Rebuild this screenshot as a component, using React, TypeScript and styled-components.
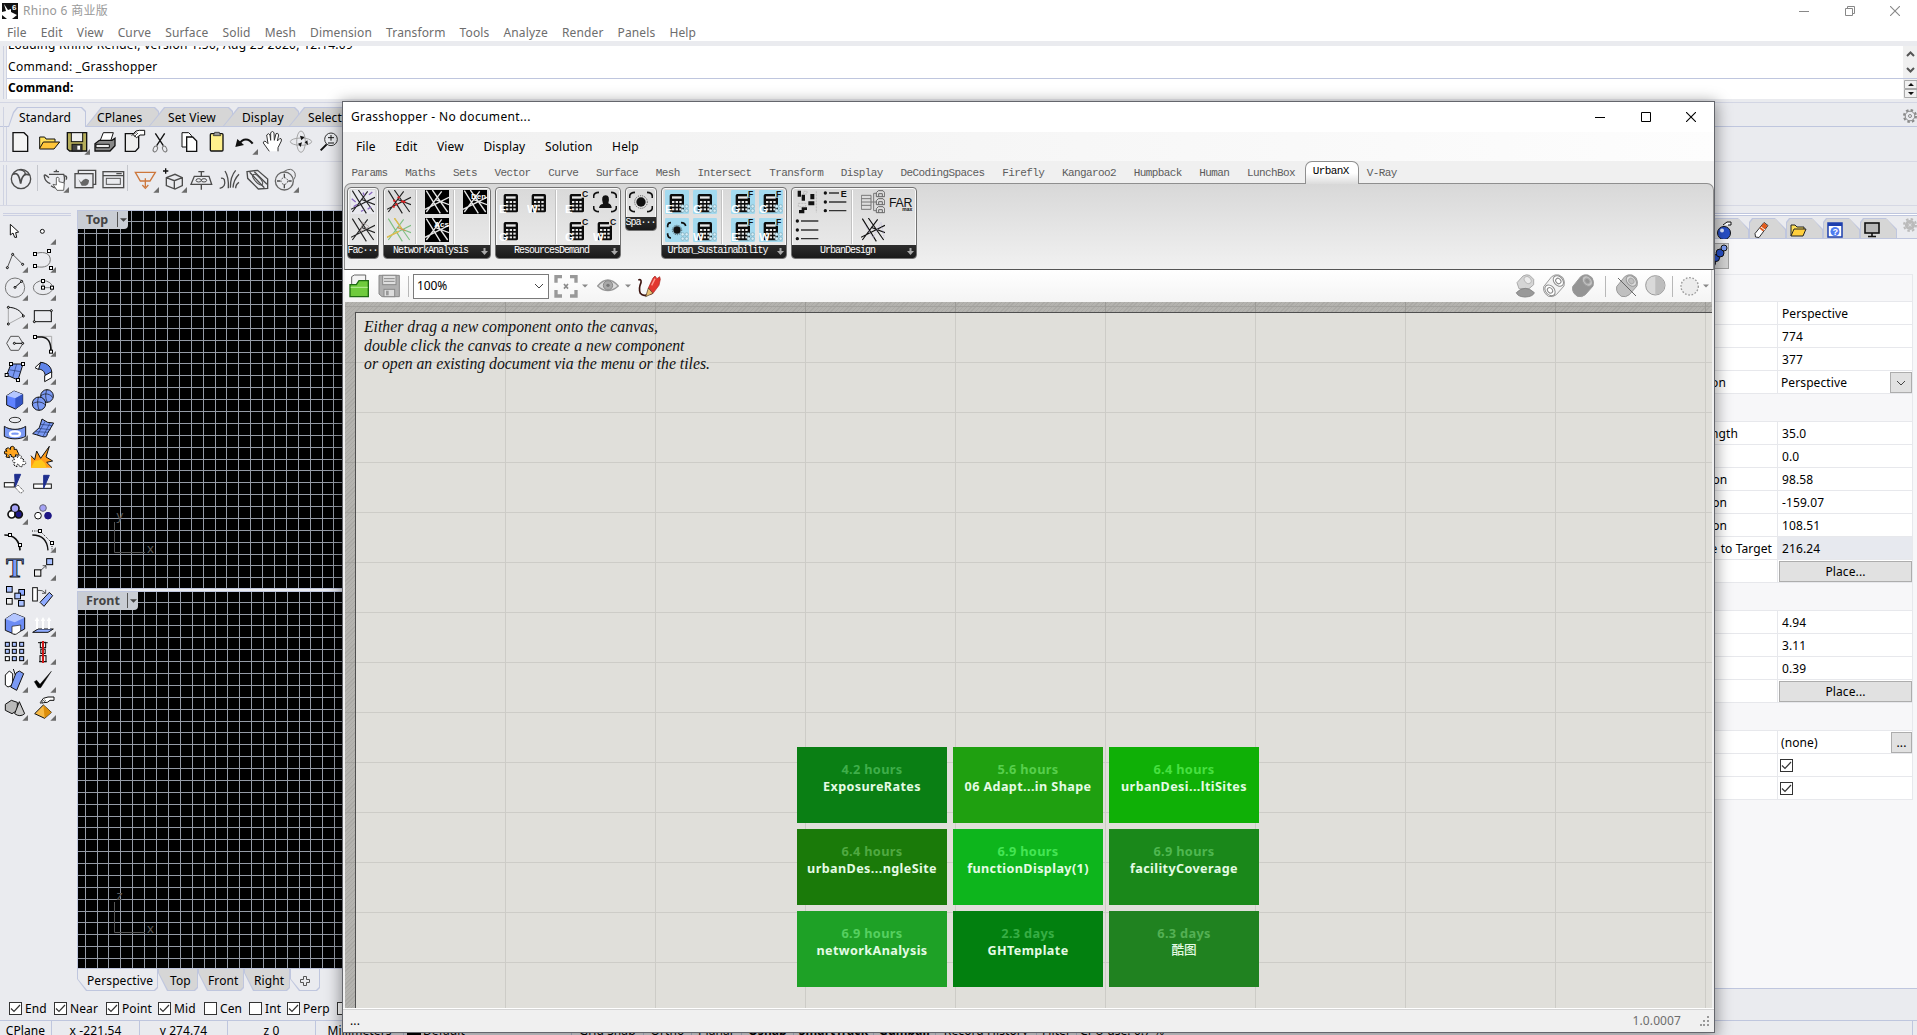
import React from "react";
import styled, { createGlobalStyle, css } from "styled-components";

const Global = createGlobalStyle`
  * { box-sizing: border-box; }
  body { margin: 0; overflow: hidden; background: #eaebef; }
  svg { display: block; }
`;

const UI = `"Noto Sans", "Open Sans", "Noto Sans CJK SC", sans-serif`;
const MONO = `"Liberation Mono", monospace`;
const LINE = "#bfc6de";

const Desktop = styled.div`
  position: relative;
  width: 1917px;
  height: 1035px;
  overflow: hidden;
  background: #eaebef;
  font: 12px/16px ${UI};
  letter-spacing: 0.1px;
  color: #000;
  white-space: nowrap;
`;

const Column = styled.div`
  display: flex;
  flex-direction: column;
`;

/* ---------- Rhino frame ---------- */

const TitleBar = styled.header`
  display: flex;
  align-items: center;
  height: 24px;
  padding: 0 17px 2px 2px;
  gap: 5px;
  background: #fff;
  color: #999;
  letter-spacing: 0.3px;
`;
const Spacer = styled.div`
  flex: 1;
`;
const WindowButtons = styled.div`
  display: flex;
  gap: 35.5px;
`;
const MenuBar = styled.nav`
  display: flex;
  align-items: center;
  gap: 14px;
  height: 17px;
  padding-left: 7px;
  background: #fff;
  color: #6d6d6d;
  letter-spacing: 0.14px;
`;
const CommandArea = styled.section`
  display: flex;
  height: 62px;
  padding: 5px 0 3px 0;
  border-bottom: 1px solid #d3d6e4;
`;
const Grip = styled.div`
  width: 4px;
  margin: 0 0 0 3px;
  border: solid #cfd3e2;
  border-width: 0 1px;
  flex: none;
`;
const CommandBody = styled(Column)`
  flex: 1;
  background: #fff;
`;
const History = styled.div`
  display: flex;
  flex: none;
  flex-direction: column;
  justify-content: flex-end;
  height: 33px;
  padding: 0 0 0 1px;
  line-height: 22px;
  letter-spacing: 0.3px;
  overflow: hidden;
  border-bottom: 1px solid ${LINE};
`;
const Prompt = styled.div`
  padding: 0 0 0 1px;
  font-weight: 700;
  line-height: 18px;
`;
const CommandScroll = styled(Column)`
  width: 14px;
  background: #f0f0f0;
`;

const TabRow = styled.div`
  display: flex;
  height: 24px;
  padding: 4px 0 0 3px;
  border-bottom: 1px solid ${LINE};
`;
const TabStart = styled.div`
  width: 5px;
  height: 20px;
  border: solid #cfd3e2;
  border-width: 0 0 0 1px;
`;
const ToolTab = styled.div<{ $w: number; $active?: boolean; $pad?: number }>`
  position: relative;
  width: ${(p) => p.$w + 10}px;
  height: ${(p) => (p.$active ? 20 : 19)}px;
  margin-right: -10px;
  padding-left: ${(p) => p.$pad ?? 19}px;
  line-height: 21px;
  z-index: 0;
  &::before, &::after {
    content: "";
    position: absolute;
    z-index: -1;
    inset: 0;
    background: ${LINE};
    clip-path: polygon(0 100%, ${(p) => (p.$active ? "5px 5px, 9px 0" : "15px 0")}, calc(100% - 4px) 0, 100% 4px, 100% 100%);
  }
  &::after {
    inset: 1px 1px 0 1px;
    background: ${(p) => (p.$active ? "#eaebef" : "#d6d6d6")};
  }
  ${(p) => p.$active && css`z-index: 2; width: ${p.$w}px; margin-right: 0;`}
`;
const GearSlot = styled.div`
  display: flex;
  width: 14px;
  padding-top: 2px;
`;
const ToolbarRow = styled.div<{ $h: number; $pad: number; $left: number }>`
  display: flex;
  height: ${(p) => p.$h}px;
  padding: ${(p) => p.$pad}px 0 0 0;
  border-bottom: 1px solid #d6d8e4;
  > svg:first-of-type { margin-left: ${(p) => p.$left}px; }
`;
const ToolSeparator = styled.div`
  width: 1px;
  height: 26px;
  margin: 0 3px 0 2px;
  background: #c4c6cc;
`;

const Body = styled.main`
  display: flex;
  height: 794px;
`;
const Palette = styled.aside`
  width: 77px;
  padding: 7px 0 0;
`;
const PaletteGrip = styled.div`
  height: 3px;
  margin: 0 6px 1px 3px;
  border: solid #cbcfe2;
  border-width: 1px 0;
`;
const PaletteGrid = styled.div`
  display: grid;
  grid-template-columns: 28px 28px;
  grid-auto-rows: 28px;
`;
const Viewports = styled(Column)`
  width: 1583px;
  padding-top: 4px;
`;
const Viewport = styled.section<{ $h: number; $gap: number }>`
  position: relative;
  width: 400px;
  height: ${(p) => p.$h}px;
  margin-bottom: ${(p) => p.$gap}px;
  border: solid ${LINE};
  border-width: 1px 0 1px 1px;
  background: #000;
`;
const ViewLabel = styled.div<{ $gap: number }>`
  position: absolute;
  left: 0;
  top: 0;
  display: flex;
  align-items: center;
  gap: ${(p) => p.$gap}px;
  height: 18px;
  padding: 0 1px 1px 8px;
  border-radius: 0 0 4px 0;
  background: #c9cdd4;
  color: #444;
  font: 700 12.5px/17px ${UI};
`;
const LabelArrow = styled.span`
  width: 10px;
  height: 15px;
  padding: 6px 0 0 2px;
  border-left: 1px solid #555;
`;
const ViewTabs = styled.div`
  display: flex;
  height: 22px;
`;
const ViewTab = styled.div<{ $w: number; $active?: boolean; $pad?: number }>`
  position: relative;
  z-index: 0;
  width: ${(p) => p.$w}px;
  height: 22px;
  padding-left: ${(p) => p.$pad ?? 10}px;
  line-height: 24px;
  &::before, &::after {
    content: "";
    position: absolute;
    z-index: -1;
    inset: 0;
    background: ${LINE};
    clip-path: polygon(0 0, 0 ${(p) => (p.$active ? "10px" : "4px")}, 9px 100%, calc(100% - 3px) 100%, 100% calc(100% - 3px), 100% 0);
  }
  &::after {
    inset: 0 1px 1px 1px;
    background: ${(p) => (p.$active ? "#eaebef" : "#d6d6d6")};
  }
`;
const Osnap = styled.div`
  display: flex;
  align-items: center;
  height: 20px;
  padding-bottom: 3px;
`;
const SnapItem = styled.label<{ $w: number }>`
  display: flex;
  align-items: center;
  gap: 3px;
  width: ${(p) => p.$w}px;
`;
const Box = styled.span`
  display: flex;
  align-items: center;
  justify-content: center;
  width: 13px;
  height: 13px;
  border: 1px solid #333;
  background: #fff;
`;
const StatusBar = styled.footer`
  display: flex;
  height: 20px;
  border-top: 1px solid ${LINE};
`;
const StatusCell = styled.div<{ $w: number; $bold?: boolean; $start?: boolean }>`
  display: flex;
  align-items: center;
  justify-content: ${(p) => (p.$start ? "flex-start" : "center")};
  gap: 2px;
  width: ${(p) => p.$w}px;
  height: 20px;
  padding: 0 0 0 ${(p) => (p.$start ? 3 : 0)}px;
  border-right: 1px solid ${LINE};
  font-weight: ${(p) => (p.$bold ? 700 : 400)};
  line-height: 20px;
`;
const Swatch = styled.span`
  width: 14px;
  height: 12px;
  background: #000;
`;

/* ---------- Properties panel ---------- */

const Properties = styled(Column)`
  width: 257px;
  padding-top: 7px;
`;
const PanelTabs = styled.div`
  display: flex;
  height: 26px;
  padding-top: 4px;
  border: solid ${LINE};
  border-width: 1px 0;
  box-shadow: inset 0 2px 0 -1px #fff, inset 0 3px 0 -1px ${LINE};
`;
const PanelTab = styled.div`
  position: relative;
  z-index: 0;
  display: flex;
  width: 37px;
  height: 20px;
  padding: 3px 0 0 3px;
  &::before, &::after {
    content: "";
    position: absolute;
    z-index: -1;
    inset: 0;
    background: ${LINE};
    clip-path: polygon(0 100%, 0 4px, 3px 0, 26px 0, 100% 11px, 100% 100%);
  }
  &::after {
    inset: 1px 1px 0 1px;
    background: #d6d6d6;
  }
`;
const PanelBody = styled.div`
  flex: 1;
  padding: 4px 4px 0 0;
  background: #f7f7f9;
`;
const PanelFoot = styled.div`
  height: 12px;
  border-top: 1px solid ${LINE};
`;
const ObjectButtons = styled.div`
  display: flex;
  height: 32px;
  padding-left: 43px;
  border-bottom: 1px solid #e7e8ec;
`;
const ObjectButton = styled.div`
  width: 26px;
  height: 26px;
  border: 1px solid #a0a0a0;
  background: #d4d4d4;
`;
const Sheet = styled.div`
  border-right: 1px solid #e7e8ec;
`;
const SheetHeader = styled.div<{ $h: number }>`
  height: ${(p) => p.$h}px;
  border-bottom: 1px solid #e7e8ec;
`;
const SheetRow = styled.div`
  display: flex;
  height: 23px;
  border-bottom: 1px solid #e7e8ec;
  background: #fff;
`;
const SheetLabel = styled.div`
  width: 118px;
  padding: 0 0 0 8px;
  border-right: 1px solid #e7e8ec;
  line-height: 23px;
`;
const SheetValue = styled.div<{ $muted?: boolean; $left?: number }>`
  display: flex;
  flex: 1;
  justify-content: space-between;
  padding-left: ${(p) => p.$left ?? 4}px;
  line-height: 23px;
  background: ${(p) => (p.$muted ? "#e7e9ef" : "#fff")};
`;
const PushButton = styled.div<{ $w: number }>`
  display: flex;
  align-items: center;
  justify-content: center;
  width: ${(p) => p.$w}px;
  height: 21px;
  margin-top: 1px;
  border: 1px solid #adadad;
  background: #e1e1e1;
`;
const ValueCheck = styled(Box)`
  margin: 5px 0 0;
`;

/* ---------- Grasshopper window ---------- */

const GhWindow = styled.section`
  position: absolute;
  left: 342px;
  top: 101px;
  width: 1373px;
  height: 932px;
  display: flex;
  flex-direction: column;
  border: 1px solid #64666c;
  background: #f0f0f0;
  box-shadow: 0 3px 14px 2px rgba(0, 0, 0, 0.38);
`;
const GhTitle = styled.header`
  display: flex;
  align-items: center;
  height: 30px;
  padding: 0 18px 1px 8px;
  background: #fff;
  letter-spacing: 0.36px;
`;
const GhMenu = styled.nav`
  display: flex;
  align-items: center;
  gap: 19.6px;
  height: 29px;
  padding: 0 0 0 13px;
  background: linear-gradient(90deg, #f0f0f0, #fdfdfd);
  letter-spacing: 0.14px;
`;
const GhTabs = styled.div`
  display: flex;
  height: 22px;
  padding-left: 8.5px;
  gap: 17.7px;
  font: 11px/24px ${MONO};
  letter-spacing: -0.6px;
  color: #5c5c5c;
`;
const GhTab = styled.div<{ $active?: boolean }>`
  height: 22px;
  ${(p) =>
    p.$active &&
    css`
      position: relative;
      height: 23px;
      margin: 0 -9.76px 0 -8px;
      padding: 0 9px 0 7px;
      line-height: 18px;
      color: #000;
      border: 1px solid #8f8f8f;
      border-bottom: 0;
      border-radius: 7px 7px 0 0;
      background: linear-gradient(#fff 50%, #dcdcdc);
    `}
`;
const Ribbon = styled.div`
  display: flex;
  align-items: flex-start;
  gap: 4px;
  height: 87px;
  margin-left: 1px;
  padding: 3px 3px 0 1.5px;
  border: 1px solid #8f8f8f;
  border-bottom-color: #555;
  border-radius: 7px 7px 0 0;
  background: linear-gradient(#d8d8d8, #f1f1f1);
`;
const RibbonPanel = styled.div<{ $w: number; $short?: boolean }>`
  width: ${(p) => p.$w}px;
  height: ${(p) => (p.$short ? 44 : 72)}px;
  border: 1px solid #727272;
  border-radius: 4px;
  overflow: hidden;
  background: linear-gradient(#d9d9d9, #ececec);
  box-shadow: inset 0 0 0 1px #fafafa;
`;
const RibbonIcons = styled.div<{ $short?: boolean }>`
  display: flex;
  height: ${(p) => (p.$short ? 29 : 57)}px;
  padding: 2px 0 0 3px;
`;
const IconGroup = styled.div<{ $cols: number }>`
  display: grid;
  grid-template-columns: repeat(${(p) => p.$cols}, 28px);
  grid-auto-rows: 28px;
`;
const RibbonRule = styled.div`
  width: 2px;
  height: 54px;
  margin-right: 8px;
  border-left: 1px solid #c2c2c2;
  border-right: 1px solid #fff;
`;
const RibbonCaption = styled.div`
  display: flex;
  height: 14px;
  margin: 0 -1px;
  background: linear-gradient(#2e2e2e, #191919);
  color: #fff;
  font: 10px/11px ${MONO};
  letter-spacing: -1px;
`;
const CaptionText = styled.span`
  flex: 1;
  text-align: center;
`;
const GhToolbar = styled.div`
  display: flex;
  align-items: center;
  height: 32px;
  margin: 0 2px 0 2px;
  padding: 0 2px 0 4px;
  border-right: 1px solid #ccc;
  background: linear-gradient(#fff, #f4f4f4);
`;
const Zoom = styled.div`
  display: flex;
  align-items: center;
  justify-content: space-between;
  width: 136px;
  height: 25px;
  margin-right: 5px;
  padding: 0 4px 0 3px;
  border: 1px solid #7a7a7a;
  background: #fff;
  font: 12px/18px ${UI};
  letter-spacing: -0.1px;
`;
const GhRule = styled.div<{ $l: number; $r: number }>`
  width: 1px;
  height: 21px;
  margin: 0 ${(p) => p.$r}px 0 ${(p) => p.$l}px;
  background: #b8b8b8;
`;
const Gap = styled.div<{ $w: number }>`
  width: ${(p) => p.$w}px;
`;
const Canvas = styled.div`
  display: flex;
  height: 706px;
  margin: 0 2px;
  padding: 10px 0 0 10px;
  background:
    repeating-linear-gradient(90deg, transparent 0 149px, #9c9b97 149px 150px) 11px 0,
    repeating-linear-gradient(180deg, transparent 0 49px, #a3a29e 49px 50px) 0 11px,
    repeating-linear-gradient(135deg, #b4b3af 0 2px, #aaa9a5 2px 3px);
`;
const Paper = styled.div`
  display: flex;
  flex-direction: column;
  flex: 1;
  padding: 5px 0 0 8px;
  border: solid #4f4f4f;
  border-width: 1px 0 0 1px;
  background:
    repeating-linear-gradient(90deg, transparent 0 149px, #cdccc7 149px 150px),
    repeating-linear-gradient(180deg, transparent 0 49px, #cdccc7 49px 50px),
    #e0dfda;
`;
const Hint = styled.p`
  height: 429px;
  margin: 0;
  font: italic 15.75px/18.6px "Liberation Serif", serif;
  letter-spacing: 0;
  color: #111;
`;
const Tiles = styled.div`
  display: grid;
  grid-template-columns: repeat(3, 150px);
  grid-auto-rows: 76px;
  gap: 6px;
  margin-left: 433px;
`;
const Tile = styled.div<{ $bg: string; $time: string; $light?: boolean }>`
  display: flex;
  flex-direction: column;
  align-items: center;
  padding-top: 13px;
  background: ${(p) => p.$bg};
  color: #e4fbe4;
  font: 700 12.6px/18px ${UI};
  small {
    font-size: 12.8px;
    letter-spacing: 0.3px;
    color: ${(p) => p.$time};
  }
  span {
    letter-spacing: ${(p) => (p.$light ? 0 : 0.4)}px;
    font-weight: ${(p) => (p.$light ? 500 : 700)};
    line-height: ${(p) => (p.$light ? 15 : 18)}px;
  }
`;
const GhStatus = styled.footer`
  display: flex;
  align-items: center;
  height: 23px;
  padding: 2px 3px 0 7px;
  border-top: 1px solid #fff;
  box-shadow: inset 0 1px 0 #d4d4d4;
`;
const Version = styled.span`
  margin-right: 19px;
  color: #6d6d6d;
`;

/* ---------- Drawing helpers ---------- */

const Sq = ({ x, y, s = 9, f = "#fff" }: { x: number; y: number; s?: number; f?: string }) => (
  <rect x={x - s / 2} y={y - s / 2} width={s} height={s} fill={f} stroke="#000" strokeWidth={3} />
);
const Dot = ({ x, y, r = 3 }: { x: number; y: number; r?: number }) => (
  <circle cx={x} cy={y} r={r} fill="#fff" stroke="#000" strokeWidth={3} />
);
const ToolSvg = styled.svg`
  flex: none;
`;
const Tool = ({ children, more }: { children: React.ReactNode; more?: boolean }) => (
  <ToolSvg width={28} height={28} viewBox="0 0 84 84" fill="none" stroke="#111" strokeWidth={3}>
    {children}
    {more && <path d="M84 66V83H67Z" fill="#6c6c6c" stroke="none" />}
  </ToolSvg>
);

const BLUE = "#7b9af5";
const gray = "#555";

const palette: [React.ReactNode, boolean][] = [
  [<path d="M31 22V54L39 48L44 61H50L47 47L56 45Z" fill="#fff" />, false],
  [<circle cx={43} cy={43} r={6} fill="#fff" />, true],
  [<><path d="M22 68L38 28L68 58" stroke={gray} /><Dot x={22} y={68} /><Dot x={38} y={28} /><Dot x={68} y={58} /></>, true],
  [<><path d="M21 26C40 20 66 20 67 44C66 70 36 68 21 64" stroke="#777" /><Sq x={21} y={27} /><Sq x={21} y={63} /><Sq x={63} y={18} /><Sq x={69} y={69} /></>, true],
  [<><circle cx={45} cy={44} r={29} stroke="#777" /><path d="M45 43L64 26" /><Dot x={45} y={43} /><Dot x={65} y={25} /></>, true],
  [<><ellipse cx={45} cy={44} rx={29} ry={21} stroke="#777" /><path d="M45 24V44H72" stroke="#888" /><Sq x={45} y={24} /><Sq x={45} y={44} /><Sq x={72} y={44} /></>, true],
  [<><path d="M25 19V69L70 45" stroke="#888" strokeWidth={2} /><path d="M25 19C45 19 62 28 70 45" /><Dot x={25} y={19} /><Dot x={70} y={45} /><Dot x={25} y={69} /></>, true],
  [<><rect x={19} y={29} width={51} height={33} /><Dot x={70} y={29} /><Dot x={19} y={62} /></>, true],
  [<><path d="M20 43L32 22H56L69 43L56 64H32Z" stroke={gray} /><path d="M44 43H68" /><Dot x={43} y={43} /><Dot x={68} y={43} /></>, true],
  [<><path d="M21 22H71V68" stroke="#aaa" /><path d="M21 24H42C62 26 69 40 69 68" strokeWidth={5} /><Sq x={21} y={24} /><Sq x={69} y={68} /></>, true],
  [<><path d="M33 21H69L54 69L20 54Z" fill={BLUE} /><path d="M50 21L38 62M26 38L62 44" stroke="#23386f" strokeWidth={2} /><Sq x={33} y={21} /><Sq x={69} y={21} /><Sq x={54} y={69} /><Sq x={20} y={54} /></>, true],
  [<><path d="M21 32L38 16L50 20L32 38Z" fill="#fff" /><path d="M38 16C60 18 72 32 71 48L52 62C52 46 46 38 32 36Z" fill="#5e83e8" /><path d="M71 44V62L50 74V56Z" fill="#fff" /></>, true],
  [<><path d="M20 32L42 18L68 28V56L46 72L20 60Z" fill="#5f82ff" /><path d="M20 32L42 18L68 28L46 40Z" fill="#b4c6ff" stroke="none" /><path d="M46 40L68 28V56L46 72Z" fill="#3354c4" stroke="none" /></>, true],
  [<><circle cx={57} cy={33} r={19} fill={BLUE} /><path d="M39 32C52 22 68 28 75 38M57 14C50 30 54 44 58 52" strokeWidth={2} /><circle cx={33} cy={56} r={20} fill={BLUE} /><path d="M14 56C26 48 44 50 52 60M32 36C26 50 30 68 34 76" strokeWidth={2} /></>, true],
  [<><ellipse cx={45} cy={21} rx={17} ry={8} stroke="#333" /><path d="M13 40C30 52 60 52 77 40V70C60 80 30 80 13 70Z" fill={BLUE} /><ellipse cx={45} cy={62} rx={15} ry={7} fill={BLUE} stroke="#fff" strokeWidth={7} /></>, true],
  [<><path d="M42 18Q58 32 77 30L58 62Q58 76 40 70T14 62L34 44Z" fill={BLUE} /><path d="M30 46L68 50M52 24L28 66M66 30L44 72M22 56L62 58M38 34L74 38" stroke="#23386f" strokeWidth={2} /></>, true],
  [<><path d="M17 24L25 20L31 26Q29 15 38 16Q46 18 42 25L50 25L53 33Q60 42 50 43L48 40L44 50L33 46Q36 40 30 40Q24 42 29 50L18 48L21 39Q12 42 13 33Q15 27 21 31Z" fill="#ffa51e" /><path d="M40 50L48 46L54 50Q54 40 61 43Q67 46 62 52L71 54L69 61Q78 60 77 67Q75 73 68 70L65 78L57 75Q58 69 52 70Q48 73 52 78L41 72L45 64Q38 66 38 59Q39 54 44 56Z" fill="#fff" strokeDasharray="4 2" /></>, false],
  [<><path d="M9 80V44L20 56L26 30L38 52L64 16L54 48L72 58L56 66L72 80Z" fill="#ff9c1a" stroke="none" /><path d="M9 80L20 60L40 56L50 66L56 80Z" fill="#ffc81a" stroke="none" /><path d="M9 44L20 56L26 30L38 52L64 16L54 48L74 60L56 64L72 80" /></>, false],
  [<><rect x={13} y={41} width={30} height={13} fill="#fff" /><path d="M44 16H62L46 53Z" fill="#1f2f8f" stroke="#1f2f8f" /><path d="M46 56L54 48L71 66L62 73Z" fill="#fff" strokeDasharray="4 2" strokeWidth={2} /></>, false],
  [<><rect x={17} y={45} width={53} height={13} fill="#fff" /><path d="M47 19H64L47 58Z" fill="#1f2f8f" stroke="#1f2f8f" /></>, false],
  [<><circle cx={45} cy={34} r={12} fill="#a4a2f5" strokeWidth={5} /><circle cx={35} cy={52} r={11} fill="#fff" strokeWidth={5} /><circle cx={56} cy={52} r={11} fill="#1d1684" strokeWidth={5} /><circle cx={45} cy={35} r={9} fill="#a4a2f5" stroke="none" /></>, true],
  [<><circle cx={45} cy={33} r={10} fill="#a4a2f5" stroke="#667" /><circle cx={30} cy={56} r={10} fill="#fff" /><circle cx={60} cy={56} r={10} fill="#1d1684" stroke="#1d1684" /></>, false],
  [<><path d="M13 30C40 30 58 45 60 76" strokeWidth={5} /><Sq x={30} y={30} /><Sq x={60} y={60} /></>, false],
  [<><path d="M13 30C40 30 58 45 60 76" strokeWidth={4} /><path d="M12 18H36L72 54V78" strokeDasharray="3 4" /><Sq x={36} y={18} /><Sq x={72} y={54} /></>, true],
  [<text x={45} y={72} textAnchor="middle" fontFamily="Liberation Serif" fontWeight={700} fontSize={80} fill={BLUE} stroke="#111" strokeWidth={2.5}>T</text>, false],
  [<><path d="M36 54L54 38M44 38H54V47" strokeWidth={2} /><Sq x={29} y={60} s={19} f="#eee" /><Sq x={65} y={26} s={18} f="#a9c0ff" /></>, true],
  [<><Sq x={28} y={25} s={17} f="#a9c0ff" /><Sq x={65} y={34} s={17} f="#8fabff" /><Sq x={53} y={45} s={17} f="#a9c0ff" /><Sq x={28} y={61} s={17} f="#eee" /><Sq x={64} y={67} s={17} f="#a9c0ff" /></>, false],
  [<><rect x={14} y={20} width={14} height={40} fill="#fff" /><path d="M36 64L64 34L74 44L48 76Z" fill="#8fabff" /><path d="M30 28Q44 26 52 36M53 26V37H42" strokeWidth={2} /></>, false],
  [<><path d="M16 30L42 13L74 26V60L44 76L16 64Z" fill="#6d8df5" /><path d="M16 30L42 13L74 26L44 40Z" fill="#b4c6ff" stroke="none" /><path d="M36 74V52L62 48V66L48 76Z" fill="#fff" strokeWidth={2} /></>, true],
  [<><path d="M14 70L30 60H76L60 70Z" fill="#8fabff" /><path d="M27 60V30M45 60V30M63 60V30" stroke="#fff" strokeWidth={6} /><path d="M20 36L27 24L34 36ZM38 36L45 24L52 36ZM56 36L63 24L70 36Z" fill="#fff" stroke="none" /></>, true],
  [<>{[22, 43, 65].flatMap((x) => [22, 43, 65].map((y) => <Sq key={x + "-" + y} x={x} y={y} s={12} f={x === 22 && y === 65 ? "#fff" : "#a9c0ff"} />))}</>, true],
  [<><Sq x={45} y={24} s={16} f="#eee" /><Sq x={45} y={43} s={13} f="#eee" /><Sq x={45} y={65} s={18} f="#eee" /><path d="M30 17H59M33 74H56" /><path d="M45 12V78" stroke="#d01818" strokeWidth={6} /></>, true],
  [<><path d="M16 30L28 18L38 26V60L24 66L16 60Z" fill="#fff" /><path d="M40 12L46 30" /><path d="M48 24L58 18L71 26L50 76L32 66Z" fill="#7b9af5" /></>, true],
  [<path d="M19 50L26 46L36 58L70 19L38 68L30 68Z" fill="#000" strokeWidth={1.5} />, true],
  [<><path d="M16 34L34 22L52 28V52L36 62L16 52Z" fill="#b9b9b9" /><path d="M58 26L74 62Q60 74 44 62Z" fill="#c9c9c9" /></>, true],
  [<><path d="M20 62L46 36L70 58L50 76Z" fill="#f7ba46" /><path d="M46 36L70 58L50 76Z" fill="#dd8e0b" stroke="none" /><path d="M36 30L46 16L60 12H78V22H66L58 28Z" fill="#fff" strokeWidth={3} /><path d="M36 30L50 20M42 32L54 22" stroke="#666" /></>, true],
];

const standardTools: [React.ReactNode, boolean?][] = [
  [<path d="M21 17H54L65 28V73H21Z" fill="#f4f4f4" strokeWidth={4} />],
  [<><path d="M17 64V30H32L36 36H63V44" fill="#ffe05a" /><path d="M17 64L28 45H77L60 66H17Z" fill="#ffc53a" /></>],
  [<><path d="M16 17H74V72H23L16 66Z" fill="#b5ad5a" strokeWidth={4} /><rect x={28} y={17} width={34} height={27} fill="#eee" /><rect x={30} y={52} width={30} height={20} fill="#444" /><rect x={46} y={56} width={8} height={12} fill="#fff" stroke="none" /></>, true],
  [<><path d="M30 42L40 17H70L62 42" fill="#fff" /><path d="M15 50L28 40H66L75 34V56L60 72H15Z" fill="#888" strokeWidth={4} /><path d="M18 52H58V62H18Z" fill="#eee" /></>],
  [<><path d="M22 20H62V62L52 73H22Z" fill="#eee" strokeWidth={4} /><path d="M44 22L54 12L64 10H80V24H66L56 32Z" fill="#fff" /><path d="M40 26L56 16M48 30L60 18" stroke="#555" /></>],
  [<><path d="M28 19L52 56M56 19L32 56" strokeWidth={4} /><ellipse cx={28} cy={66} rx={6} ry={9} transform="rotate(25 28 66)" stroke="#777" /><ellipse cx={56} cy={66} rx={6} ry={9} transform="rotate(-25 56 66)" stroke="#777" /></>],
  [<><path d="M24 17H44L52 25V60H24Z" fill="#fff" /><path d="M38 30H56L68 42V73H38Z" fill="#fff" strokeWidth={4} /></>],
  [<><rect x={25} y={20} width={38} height={52} rx={3} fill="#fff08c" strokeWidth={4} /><path d="M34 26L38 16H52L56 26Z" fill="#999" strokeWidth={2} /></>],
  [<><path d="M28 50C38 34 56 32 68 50" strokeWidth={6} /><path d="M16 60L22 36L42 54Z" fill="#111" stroke="none" /></>, true],
  [<path d="M34 73L16 48Q16 40 24 44L30 50L26 24Q32 16 36 24L38 40V17Q44 10 48 17L49 40L54 20Q60 16 62 24L58 42L66 34Q72 34 70 42L60 62V73" fill="#fff" stroke="#333" />],
  [<><ellipse cx={45} cy={44} rx={32} ry={11} stroke="#999" strokeWidth={2.5} /><ellipse cx={45} cy={44} rx={13} ry={32} stroke="#999" strokeWidth={2.5} /><path d="M42 26L56 30L46 40ZM36 50L48 46L44 60ZM56 46L64 40L66 54Z" fill="#111" stroke="none" /></>],
  [<><path d="M20 70L38 52" strokeWidth={6} /><circle cx={51} cy={37} r={19} fill="#eceef2" stroke="#333" /><path d="M42 32H60M51 24V41M42 48H60" /></>],
];

const VR = "#4c4c4c";
const vrayTools: [React.ReactNode, boolean?][] = [
  [<><circle cx={42} cy={42} r={29} stroke={VR} strokeWidth={4} /><path d="M18 28C32 20 37 34 41 56C45 30 54 24 68 30" strokeWidth={5} stroke={VR} /><path d="M36 14C54 16 58 24 52 30" strokeWidth={4} stroke={VR} /></>],
  [<><path d="M24 38Q8 24 10 34Q12 50 28 56M24 28H68Q74 44 66 60M30 62Q40 70 50 70M38 20H54M46 14V20M68 34Q80 30 76 44" stroke={VR} strokeWidth={4} /><path d="M48 76L36 58L46 60V38Q52 34 54 40V50L70 54L68 76Z" fill="#fff" stroke="#666" /></>, true],
  [<><path d="M28 24V16H80V58H72" stroke={VR} strokeWidth={4} /><rect x={18} y={26} width={54} height={42} stroke={VR} strokeWidth={4} /><path d="M28 42L36 52Q48 34 60 46Q60 60 50 62H38Z" fill="#666" stroke="none" /></>],
  [<><rect x={18} y={20} width={62} height={48} stroke={VR} strokeWidth={4} /><path d="M18 32H80M58 26H74" stroke={VR} strokeWidth={4} /><rect x={28} y={40} width={42} height={18} stroke="#555" /></>],
  [<><path d="M13 22H73L57 48H28Z" stroke="#cd773c" strokeWidth={4} /><path d="M43 40V66M34 60L43 70L52 60" stroke="#cd773c" strokeWidth={4} /></>, true],
  [<><path d="M22 38L48 28L70 38V62L48 72L22 62ZM22 38L46 47L70 38M46 47V72" stroke={VR} strokeWidth={4} /><path d="M12 18H28M20 10V26" strokeWidth={4} /></>, true],
  [<><path d="M22 34H66L74 58H12Z" stroke={VR} strokeWidth={4} /><path d="M43 34V18M43 58V74M34 20H52" stroke={VR} strokeWidth={4} /><ellipse cx={35} cy={46} rx={8} ry={5} stroke={VR} /><ellipse cx={51} cy={46} rx={8} ry={5} stroke={VR} /></>],
  [<path d="M14 70Q34 66 28 44Q24 38 18 40M40 70Q42 36 30 18M46 68Q46 34 62 16M54 68Q56 44 72 28M62 70Q62 58 72 52" stroke={VR} strokeWidth={4} />],
  [<><path d="M12 20L44 16L74 42V70L46 72L14 40Z" stroke={VR} strokeWidth={4} /><path d="M20 22L64 68M34 20L72 58" stroke={VR} strokeWidth={4} /><ellipse cx={44} cy={44} rx={8} ry={20} transform="rotate(-42 44 44)" stroke={VR} /></>],
  [<><circle cx={40} cy={48} r={27} stroke="#666" strokeWidth={4} /><path d="M38 20Q62 4 72 24Q76 34 68 44" stroke="#666" /><circle cx={40} cy={48} r={10} stroke={VR} strokeDasharray="5 4" /><path d="M40 26V38M40 58V70M18 48H28M52 48H62" stroke={VR} strokeWidth={4} /></>, true],
];

const Check = () => (
  <svg width={11} height={11} viewBox="0 0 11 11" fill="none" stroke="#333" strokeWidth={1.2}>
    <path d="M1 5.5L4 8.5L10 2" />
  </svg>
);
const DownArrow = ({ c = "#444", w = 7 }: { c?: string; w?: number }) => (
  <svg width={w} height={4} viewBox="0 0 8 4"><path d="M0 0H8L4 4Z" fill={c} /></svg>
);
const Gear = ({ solid }: { solid?: boolean }) => (
  <svg width={14} height={14} viewBox="0 0 14 14" fill="none" stroke={solid ? "#bbb" : "#8a8a8a"}>
    <circle cx={7} cy={7} r={6} strokeWidth={2} strokeDasharray="2.5 2.2" />
    <circle cx={7} cy={7} r={solid ? 3.6 : 4.8} strokeWidth={solid ? 3 : 1} />
    <circle cx={7} cy={7} r={1.5} />
  </svg>
);
const MinIcon = ({ c }: { c: string }) => <svg width={10} height={10}><path d="M0 5.5H10" stroke={c} /></svg>;
const MaxIcon = ({ c }: { c: string }) => <svg width={10} height={10}><path d="M.5 .5H9.5V9.5H.5Z" stroke={c} fill="none" /></svg>;
const RestoreIcon = ({ c }: { c: string }) => <svg width={10} height={10}><path d="M.5 2.5H7.5V9.5H.5ZM2.5 2.5V.5H9.5V7.5H7.5" stroke={c} fill="none" /></svg>;
const CloseIcon = ({ c }: { c: string }) => <svg width={10} height={10}><path d="M0 0L10 10M10 0L0 10" stroke={c} strokeWidth={1.1} /></svg>;

/* ---------- Viewport grid ---------- */

const STEP = 11.88;
const ViewGrid = ({ h, x0, y0, axisY, up }: { h: number; x0: number; y0: number; axisY: number; up: string }) => {
  const xs = Array.from({ length: 26 }, (_, i) => Math.floor(x0 + i * STEP) + 0.5);
  const ys = Array.from({ length: 34 }, (_, i) => Math.floor(y0 + i * STEP) + 0.5).filter((y) => y < h);
  return (
    <svg width={330} height={h} stroke="#959ba6" fill="none">
      {xs.map((x) => <path key={"x" + x} d={`M${x} 0V${h}`} />)}
      {ys.map((y) => <path key={"y" + y} d={`M0 ${y}H330`} />)}
      <path d={`M36.5 ${axisY - 30}V${axisY + 0.5}H67`} stroke="#555" />
      <g fill="#5c5c5c" stroke="none" fontFamily="Noto Sans" fontSize={13}>
        <text x={38.5} y={axisY - 32}>{up}</text>
        <text x={69} y={axisY + 1}>x</text>
      </g>
    </svg>
  );
};

/* ---------- Grasshopper component icons (72 unit cell) ---------- */

const G = ({ children }: { children: React.ReactNode }) => (
  <svg width={24} height={24} viewBox="0 0 72 72" fill="none">{children}</svg>
);
const NET = "M4 2L46 70M22 0L68 66M50 4L4 66M0 58L72 22M30 28L72 44";
const Net = ({ c = "#222", bg, dots, w = 3.4, extra }: { c?: string; bg?: string; dots?: string; w?: number; extra?: React.ReactNode }) => (
  <G>
    {bg && <rect width={72} height={72} fill={bg} />}
    <path d={NET} stroke={c} strokeWidth={w} />
    {dots && [[35, 22], [22, 32], [28, 43], [52, 36], [20, 50], [46, 34]].map(([x, y]) => <circle key={x} cx={x} cy={y} r={3.5} fill={dots} />)}
    {extra}
  </G>
);
const label = (x: number, y: number, t: string, size: number, f: string) => (
  <text x={x} y={y} fontFamily="Liberation Sans" fontWeight={700} fontSize={size} letterSpacing={0} fill={f}>{t}</text>
);
const Calc = ({ l, c, blue }: { l: string; c?: string; blue?: boolean }) => (
  <G>
    {blue && <rect width={72} height={72} rx={4} fill="#a3daef" />}
    <rect x={14} y={12} width={43} height={55} rx={5} fill="#0c0c0c" />
    <rect x={21} y={19} width={29} height={7} fill="#e8e8e8" />
    {[33, 44, 55].flatMap((y) => [21, 32, 43].map((x) => <rect key={x + "." + y} x={x} y={y} width={7} height={6} fill="#e8e8e8" />))}
    {label(0, 68, l, 34, "#fff")}
    {c && <rect x={48} y={0} width={24} height={23} fill={blue ? "#a3daef" : "#dfdfdf"} />}
    {c && label(51, 20, c, 26, "#111")}
    {blue && <Flower />}
  </G>
);
const Flower = () => (
  <g fill="#d4eef8" stroke="#7fa9b8" strokeWidth={2}>
    <circle cx={53} cy={49} r={5} /><circle cx={65} cy={49} r={5} /><circle cx={53} cy={62} r={5} /><circle cx={65} cy={62} r={5} />
  </g>
);
const Focus = ({ person, blue }: { person?: boolean; blue?: boolean }) => (
  <G>
    {blue && <rect width={72} height={72} rx={4} fill="#a3daef" />}
    <path d={blue ? "M8 28V22Q9 14 18 14M48 14Q60 14 62 24M18 60Q9 60 8 50V46" : "M2 24V18Q3 8 18 7M54 7Q69 8 70 18V24M70 48V54Q69 64 54 65M18 65Q3 64 2 54V48"} stroke="#111" strokeWidth={5} />
    {person ? <path d="M18 54Q20 42 30 42Q22 16 38 16Q52 16 46 40Q56 44 56 54Z" fill="#111" /> : (
      <><circle cx={36} cy={36} r={blue ? 14 : 19} stroke="#111" strokeWidth={2} strokeDasharray="3 3" /><circle cx={36} cy={36} r={blue ? 11 : 14} fill="#111" /></>
    )}
    {blue && <Flower />}
  </G>
);
const List = ({ e }: { e?: boolean }) => (
  <G>
    <path d={`M18 9H${e ? 48 : 70}M18 36H70M18 62H70`} stroke="#333" strokeWidth={4} />
    {[9, 36, 62].map((y) => <circle key={y} cx={7} cy={y} r={5} fill="#111" />)}
    {e && label(53, 20, "E", 27, "#111")}
  </G>
);
const Blocks = () => (
  <G>
    <path d="M8 2H18V20H8ZM20 14H30V32H20ZM46 12H58V28H46ZM40 34H58V46H40ZM20 52H36V60H28V70H12V60H20Z" fill="#111" />
    <path d="M26 4H36V12H26ZM10 40H32V50H10ZM64 4V68" stroke="#aaa" strokeWidth={2} strokeDasharray="6 3" />
  </G>
);
const Tree = () => (
  <G>
    <path d="M1 16H30V58H1ZM1 26H30M1 36H30M1 46H30M30 36H46M38 10V62M38 10H46M38 62H46" stroke="#777" strokeWidth={3} />
    {[2, 26, 50].map((y) => <path key={y} d={`M46 ${y + 6}L52 ${y}H66L71 ${y + 6}V${y + 18}H46ZM53 ${y + 18}V${y + 9}H64V${y + 18}`} stroke="#666" strokeWidth={3} />)}
  </G>
);
const Far = () => (
  <G>
    <text x={0} y={50} fontFamily="Liberation Sans" fontSize={37} textLength={70} fill="#111">FAR</text>
    {label(40, 62, "max", 15, "#111")}
  </G>
);

type PanelDef = { name: string; w: number; short?: boolean; plus?: boolean; groups: { cols: number; icons: React.ReactNode[] }[] };
const panels: PanelDef[] = [
  {
    name: "Fac···", w: 32, groups: [{ cols: 1, icons: [
      <Net bg="#e9e9ee" extra={<path d="M2 26L14 36M50 58L60 50M8 50L18 44M54 14L64 6M36 8L40 16M30 64L38 60" stroke="#8a68c0" strokeWidth={4} />} />,
      <Net extra={<path d="M34 12L54 26L30 40Z" stroke="#a99" strokeWidth={2} />} />] }],
  },
  {
    name: "NetworkAnalysis", w: 108, plus: true, groups: [
      { cols: 1, icons: [<Net dots="#e02020" />, <Net c="#7fbf83" w={3.4} extra={<><path d="M0 58L36 40M22 0L46 34" stroke="#e3bb4b" strokeWidth={4} /><path d="M30 28L56 38" stroke="#e08a4b" strokeWidth={3} /></>} />] },
      { cols: 1, icons: [<Net bg="#000" c="#e6e6e6" w={4} />, <Net bg="#000" c="#e6e6e6" w={4} extra={label(28, 26, "Acs", 24, "#fff")} />] },
      { cols: 1, icons: [<Net bg="#000" c="#e6e6e6" w={4} extra={label(24, 26, "Den", 24, "#fff")} />] },
    ],
  },
  {
    name: "ResourcesDemand", w: 126, plus: true, groups: [
      { cols: 2, icons: [<Calc l="E" />, <Calc l="W" />, <Calc l="G" />] },
      { cols: 2, icons: [<Calc l="E" c="C" />, <Focus person />, <Calc l="G" c="C" />, <Calc l="W" c="C" />] },
    ],
  },
  { name: "Spa···", w: 32, short: true, groups: [{ cols: 1, icons: [<Focus />] }] },
  {
    name: "Urban_Sustainability", w: 126, plus: true, groups: [
      { cols: 2, icons: [<Calc l="E" blue />, <Calc l="G" blue />, <Focus blue />, <Calc l="W" blue />] },
      { cols: 2, icons: [<Calc l="G" c="F" blue />, <Calc l="G" c="F" blue />, <Calc l="E" c="F" blue />, <Calc l="W" c="F" blue />] },
    ],
  },
  {
    name: "UrbanDesign", w: 126, plus: true, groups: [
      { cols: 2, icons: [<Blocks />, <List e />, <List />] },
      { cols: 2, icons: [<Tree />, <Far />, <Net c="#111" extra={<path d="M12 20L36 60L60 14L70 60" stroke="#b9b2d8" strokeWidth={2} strokeDasharray="5 3" />} />] },
    ],
  },
];

const ghTabs = ["Params", "Maths", "Sets", "Vector", "Curve", "Surface", "Mesh", "Intersect", "Transform", "Display", "DeCodingSpaces", "Firefly", "Kangaroo2", "Humpback", "Human", "LunchBox", "UrbanX", "V-Ray"];

const tiles = [
  ["4.2 hours", "ExposureRates", "#0a7f14", "#3fae4a"],
  ["5.6 hours", "06 Adapt...in Shape", "#1fa010", "#57cf4c"],
  ["6.4 hours", "urbanDesi...ltiSites", "#0fb006", "#47e040"],
  ["6.4 hours", "urbanDes...ngleSite", "#1a7a09", "#50a941"],
  ["6.9 hours", "functionDisplay(1)", "#0db51c", "#45e554"],
  ["6.9 hours", "facilityCoverage", "#1a881a", "#4fb750"],
  ["6.9 hours", "networkAnalysis", "#1ea126", "#56d060"],
  ["2.3 days", "GHTemplate", "#02800f", "#37ae45"],
  ["6.3 days", "酷图", "#208220", "#54b054"],
];

const T = ({ w = 22, children }: { w?: number; children: React.ReactNode }) => (
  <svg width={w} height={24} viewBox={`0 0 ${w * 3} 72`} fill="none" strokeWidth={3} stroke="#8a8a8a">{children}</svg>
);
const CYL = "M2 38L26 8Q36 0 48 3L60 11Q67 22 63 36L40 62Q30 71 16 67L6 58Q0 50 2 38Z";
const Cylinder = ({ f, top }: { f: string; top: string }) => (
  <>
    <path d={CYL} fill={f} stroke="#999" />
    <ellipse cx={46} cy={21} rx={18} ry={13} transform="rotate(48 46 21)" fill={top} stroke="#999" />
    <ellipse cx={46} cy={21} rx={9} ry={7} transform="rotate(48 46 21)" fill={f} stroke="#aaa" />
  </>
);

const panelIcons: React.ReactNode[] = [
  <><circle cx={9} cy={12} r={6.5} fill="#2850c8" stroke="#111" /><circle cx={7} cy={9.5} r={2} fill="#dfe8ff" /><path d="M8 4L12 1H16V4H13" fill="#fff" stroke="#111" /></>,
  <><path d="M3 12.5L12 1.5L16 4.5L7 16.5L3.5 16Z" fill="#fff" stroke="#333" /><path d="M7.5 7.5L12 1.8L15.6 4.8L11 10.5Z" fill="#e05a1c" /><path d="M9 6L13 9" stroke="#fff" /></>,
  <><path d="M2 15V4H6L8 6H15V8" fill="#ffe05a" stroke="#222" /><path d="M2 15L5 8H17L14 15Z" fill="#ffcf3c" stroke="#222" /></>,
  <><rect x={2} y={2} width={14} height={14} fill="#fff" stroke="#1d3fae" strokeWidth={1.5} /><path d="M2 3.5H16" stroke="#1d3fae" strokeWidth={3} /><circle cx={9} cy={10.5} r={4.5} fill="#4f7cf0" /><text x={6.6} y={14} fontSize={9} fontWeight={700} fontFamily="Liberation Sans" fill="#fff">?</text></>,
  <><rect x={2} y={2} width={14} height={10} fill="#b8b8b8" stroke="#111" strokeWidth={1.6} /><path d="M9 12V15M5 15.5H13" stroke="#111" strokeWidth={1.6} /></>,
];

const Row = ({ k, v, muted }: { k?: string; v: string; muted?: boolean }) => (
  <SheetRow><SheetLabel>{k}</SheetLabel><SheetValue $muted={muted}>{v}</SheetValue></SheetRow>
);
const PlaceRow = () => (
  <SheetRow><SheetLabel /><SheetValue $left={1}><PushButton $w={133}>Place...</PushButton></SheetValue></SheetRow>
);
const CheckRow = () => (
  <SheetRow><SheetLabel /><SheetValue $left={2}><ValueCheck><Check /></ValueCheck></SheetValue></SheetRow>
);

const Rhino = () => (
  <>
    <TitleBar>
      <svg width={16} height={16} viewBox="0 0 16 16">
        <rect width={16} height={16} fill="#111" />
        <path d="M0 9L4 8L2 1L6 7L9 6L9 9L15 12L10 16H5L0 12Z" fill="#fff" />
        <text x={10} y={7} fontSize={8} fontWeight={700} fontFamily="Liberation Sans" letterSpacing={0} fill="#fff">6</text>
      </svg>
      <span>Rhino 6 商业版</span>
      <Spacer />
      <WindowButtons><MinIcon c="#888" /><RestoreIcon c="#888" /><CloseIcon c="#888" /></WindowButtons>
    </TitleBar>
    <MenuBar>
      {["File", "Edit", "View", "Curve", "Surface", "Solid", "Mesh", "Dimension", "Transform", "Tools", "Analyze", "Render", "Panels", "Help"].map((m) => <span key={m}>{m}</span>)}
    </MenuBar>
    <CommandArea>
      <Grip />
      <CommandBody>
        <History>
          <span>Loading Rhino Render, version 1.50, Aug 25 2020, 12:14:09</span>
          <span>Command: _Grasshopper</span>
        </History>
        <Prompt>Command:</Prompt>
      </CommandBody>
      <CommandScroll>
        <svg width={14} height={53} viewBox="0 0 14 53" fill="none" stroke="#555" strokeWidth={2}>
          <path d="M4 10L7.5 6.5L11 10M4 22L7.5 25.5L11 22" />
          <path d="M0 32.5H14" stroke={LINE} strokeWidth={1} />
          <path d="M1.5 34.5H14V42.5H1.5ZM1.5 43.5H14V51.5H1.5Z" stroke="#aaa" strokeWidth={1} fill="#f0f0f0" />
          <path d="M5 40H11L8 37ZM5 46H11L8 49Z" fill="#111" stroke="none" />
        </svg>
      </CommandScroll>
    </CommandArea>
    <TabRow>
      <TabStart />
      <ToolTab $w={78} $active $pad={11}>Standard</ToolTab>
      <ToolTab $w={63} $pad={11}>CPlanes</ToolTab>
      <ToolTab $w={74}>Set View</ToolTab>
      <ToolTab $w={66}>Display</ToolTab>
      <ToolTab $w={70}>Select</ToolTab>
      <Spacer />
      <GearSlot><Gear /></GearSlot>
    </TabRow>
    <ToolbarRow $h={35} $pad={0} $left={-1}>
      <Grip />
      {standardTools.map(([d, more], i) => <Tool key={i} more={more}>{d}</Tool>)}
    </ToolbarRow>
    <ToolbarRow $h={44} $pad={3} $left={0}>
      <Grip />
      {vrayTools.map(([d, more], i) => (
        <React.Fragment key={i}>
          {(i === 1 || i === 4) && <ToolSeparator />}
          <Tool more={more}>{d}</Tool>
        </React.Fragment>
      ))}
    </ToolbarRow>
    <Body>
      <Palette>
        <PaletteGrip />
        <PaletteGrid>{palette.map(([d, more], i) => <Tool key={i} more={more}>{d}</Tool>)}</PaletteGrid>
      </Palette>
      <Viewports>
        <Viewport $h={379} $gap={2}>
          <ViewGrid h={377} x0={6.4} y0={10.4} axisY={341} up="y" />
          <ViewLabel $gap={9}>Top<LabelArrow><DownArrow /></LabelArrow></ViewLabel>
        </Viewport>
        <Viewport $h={378} $gap={0}>
          <ViewGrid h={376} x0={7.2} y0={10.2} axisY={340} up="z" />
          <ViewLabel $gap={7}>Front<LabelArrow><DownArrow /></LabelArrow></ViewLabel>
        </Viewport>
        <ViewTabs>
          <ViewTab $w={81} $active>Perspective</ViewTab>
          <ViewTab $w={40} $pad={12}>Top</ViewTab>
          <ViewTab $w={46}>Front</ViewTab>
          <ViewTab $w={46}>Right</ViewTab>
          <ViewTab $w={30} $active>
            <svg width={10} height={22} viewBox="0 0 10 22"><path d="M3.5 7.5H6.5V10.5H9.5V13.5H6.5V16.5H3.5V13.5H.5V10.5H3.5Z" fill="none" stroke="#555" /></svg>
          </ViewTab>
        </ViewTabs>
      </Viewports>
      <Properties>
        <PanelTabs>
          <Gap $w={52} />
          {panelIcons.map((d, i) => <PanelTab key={i}><svg width={18} height={18} viewBox="0 0 18 18" fill="none">{d}</svg></PanelTab>)}
          <Spacer />
          <Gear solid />
        </PanelTabs>
        <PanelBody>
          <ObjectButtons>
            <ObjectButton>
              <svg width={24} height={24} viewBox="0 0 24 24" fill="#2850c8" stroke="#111">
                <circle cx={8} cy={19} r={3.5} /><circle cx={12} cy={14} r={3.5} /><circle cx={16} cy={9} r={4} /><circle cx={20} cy={4} r={3} fill="#7f9ff5" />
              </svg>
            </ObjectButton>
          </ObjectButtons>
          <Sheet>
            <SheetHeader $h={27} />
            <Row v="Perspective" />
            <Row v="774" />
            <Row v="377" />
            <SheetRow>
              <SheetLabel>Projection</SheetLabel>
              <SheetValue $left={3}>
                Perspective
                <PushButton $w={22}>
                  <svg width={10} height={6} fill="none" stroke="#444"><path d="M1 1L5 5L9 1" /></svg>
                </PushButton>
              </SheetValue>
            </SheetRow>
            <SheetHeader $h={28} />
            <Row k="Lens Length" v="35.0" />
            <Row v="0.0" />
            <Row k="X Location" v="98.58" />
            <Row k="Y Location" v="-159.07" />
            <Row k="Z Location" v="108.51" />
            <Row k="Distance to Target" v="216.24" muted />
            <PlaceRow />
            <SheetHeader $h={28} />
            <Row v="4.94" />
            <Row v="3.11" />
            <Row v="0.39" />
            <PlaceRow />
            <SheetHeader $h={28} />
            <SheetRow>
              <SheetLabel />
              <SheetValue $left={3}>(none)<PushButton $w={21}>...</PushButton></SheetValue>
            </SheetRow>
            <CheckRow />
            <CheckRow />
          </Sheet>
        </PanelBody>
        <PanelFoot />
      </Properties>
    </Body>
    <Osnap>
      <Grip><Gap $w={1} /></Grip>
      <Gap $w={2} />
      {([["End", 1, 45], ["Near", 1, 52], ["Point", 1, 52], ["Mid", 1, 46], ["Cen", 0, 45], ["Int", 0, 38], ["Perp", 1, 50], ["Tan", 0, 50]] as [string, number, number][]).map(([n, on, w]) => (
        <SnapItem key={n} $w={w}><Box>{on ? <Check /> : null}</Box>{n}</SnapItem>
      ))}
    </Osnap>
    <StatusBar>
      <StatusCell $w={52}>CPlane</StatusCell>
      <StatusCell $w={88}>x -221.54</StatusCell>
      <StatusCell $w={88}>y 274.74</StatusCell>
      <StatusCell $w={88}>z 0</StatusCell>
      <StatusCell $w={88}>Millimeters</StatusCell>
      <StatusCell $w={168} $start><Swatch />Default</StatusCell>
      <StatusCell $w={72}>Grid Snap</StatusCell>
      <StatusCell $w={48}>Ortho</StatusCell>
      <StatusCell $w={50}>Planar</StatusCell>
      <StatusCell $w={52} $bold>Osnap</StatusCell>
      <StatusCell $w={80} $bold>SmartTrack</StatusCell>
      <StatusCell $w={62} $bold>Gumball</StatusCell>
      <StatusCell $w={101}>Record History</StatusCell>
      <StatusCell $w={40}>Filter</StatusCell>
      <StatusCell $w={836} $start>CPU use: 0.7 %</StatusCell>
    </StatusBar>
  </>
);

const Grasshopper = () => (
  <GhWindow>
    <GhTitle>
      <span>Grasshopper - No document...</span>
      <Spacer />
      <WindowButtons><MinIcon c="#000" /><MaxIcon c="#000" /><CloseIcon c="#000" /></WindowButtons>
    </GhTitle>
    <GhMenu>{["File", "Edit", "View", "Display", "Solution", "Help"].map((m) => <span key={m}>{m}</span>)}</GhMenu>
    <GhTabs>{ghTabs.map((t) => <GhTab key={t} $active={t === "UrbanX"}>{t}</GhTab>)}</GhTabs>
    <Ribbon>
      {panels.map((p) => (
        <RibbonPanel key={p.name} $w={p.w} $short={p.short}>
          <RibbonIcons $short={p.short}>
            {p.groups.map((g, i) => (
              <React.Fragment key={i}>
                {i > 0 && <RibbonRule />}
                <IconGroup $cols={g.cols}>{g.icons.map((ic, j) => <React.Fragment key={j}>{ic}</React.Fragment>)}</IconGroup>
              </React.Fragment>
            ))}
          </RibbonIcons>
          <RibbonCaption>
            <CaptionText>{p.name}</CaptionText>
            {p.plus && <svg width={12} height={14} viewBox="0 0 12 14"><path d="M4.5 3H6.5V6H9L5.5 10L2 6H4.5Z" fill="#aaa" /></svg>}
          </RibbonCaption>
        </RibbonPanel>
      ))}
    </Ribbon>
    <GhToolbar>
      <T w={20}>
        <path d="M8 30V8L16 3H50V30" fill="#f4f4f4" stroke="#666" />
        <path d="M3 68V32H22L30 20H58V68Z" fill="#6fcb3d" stroke="#1d6b12" strokeWidth={4} />
        <path d="M5 40H56" stroke="#b9f09a" />
      </T>
      <Gap $w={9} />
      <T w={22}>
        <path d="M3 4H64V68H12L3 60Z" fill="#b0b0b0" />
        <rect x={14} y={4} width={40} height={28} fill="#e0e0e0" /><path d="M18 14H50M18 22H50" />
        <rect x={18} y={46} width={32} height={22} fill="#ddd" /><rect x={24} y={50} width={8} height={14} fill="#999" stroke="none" />
      </T>
      <GhRule $l={8} $r={4} />
      <Zoom>100%<svg width={10} height={6} fill="none" stroke="#444"><path d="M1 1L5 5L9 1" /></svg></Zoom>
      <T w={24}>
        <path d="M6 26V8H24M48 8H66V26M66 48V66H48M24 66H6V48" stroke="#999" strokeWidth={10} />
        <path d="M30 30L42 44M42 30L30 44" strokeWidth={5} />
      </T>
      <Gap $w={4} />
      <DownArrow c="#888" w={6} />
      <Gap $w={9} />
      <T w={22}>
        <path d="M2 36Q32 0 64 36Q32 64 2 36Z" fill="#ddd" stroke="#999" strokeWidth={4} />
        <circle cx={33} cy={34} r={14} fill="#a8a8a8" stroke="#888" /><circle cx={33} cy={34} r={5} fill="#777" stroke="none" />
      </T>
      <Gap $w={6} />
      <DownArrow c="#888" w={6} />
      <Gap $w={6} />
      <T w={24}>
        <path d="M4 18Q14 14 12 26Q4 44 10 58Q18 68 30 62" stroke="#3c1510" strokeWidth={5} />
        <path d="M34 42L48 12L54 6L60 14L68 8L70 16L66 34L48 58L40 62Z" fill="#e2362f" stroke="#a32620" strokeWidth={2} />
        <path d="M34 42L48 58L26 68Z" fill="#e9bf70" stroke="#432" strokeWidth={2} />
        <path d="M44 34L54 14" stroke="#ff9a90" strokeWidth={4} />
      </T>
      <Spacer />
      <T w={20}>
        <path d="M6 26L24 6Q34 0 44 4L56 16V32L42 44H12Z" fill="#d5d5d5" stroke="#aaa" />
        <path d="M4 56Q30 30 58 56Q54 68 30 69Q8 68 4 56Z" fill="#999" stroke="#888" />
        <ellipse cx={38} cy={18} rx={12} ry={9} transform="rotate(48 38 18)" fill="#ececec" stroke="#bbb" />
      </T>
      <Gap $w={8} />
      <T>
        <path d={CYL} fill="#f3f3f3" stroke="#999" />
        <ellipse cx={46} cy={21} rx={18} ry={13} transform="rotate(48 46 21)" fill="#fff" /><ellipse cx={46} cy={21} rx={9} ry={7} transform="rotate(48 46 21)" />
        <ellipse cx={21} cy={49} rx={18} ry={13} transform="rotate(48 21 49)" fill="#fff" /><ellipse cx={21} cy={49} rx={9} ry={7} transform="rotate(48 21 49)" />
      </T>
      <Gap $w={7} />
      <T><Cylinder f="#949494" top="#c4c4c4" /></T>
      <GhRule $l={11} $r={10} />
      <T><Cylinder f="#c0c0c0" top="#dcdcdc" /><path d="M6 12L60 66" stroke="#666" /></T>
      <Gap $w={6} />
      <T>
        <circle cx={34} cy={34} r={29} fill="#d9d9d9" stroke="#999" />
        <path d="M34 6A28 28 0 0 1 34 62Z" fill="#bdbdbd" stroke="none" />
      </T>
      <GhRule $l={6} $r={7} />
      <T w={20}><circle cx={29} cy={37} r={26} fill="#ececec" stroke="#999" strokeWidth={4} strokeDasharray="5 5" /></T>
      <Gap $w={3} />
      <DownArrow c="#888" w={6} />
    </GhToolbar>
    <Canvas>
      <Paper>
        <Hint>
          Either drag a new component onto the canvas,<br />
          double click the canvas to create a new component<br />
          or open an existing document via the menu or the tiles.
        </Hint>
        <Tiles>
          {tiles.map(([time, name, bg, c]) => (
            <Tile key={name} $bg={bg} $time={c} $light={name === "酷图"}><small>{time}</small><span>{name}</span></Tile>
          ))}
        </Tiles>
      </Paper>
    </Canvas>
    <GhStatus>
      <span>...</span>
      <Spacer />
      <Version>1.0.0007</Version>
      <svg width={11} height={11} fill="#999">
        <path d="M7 0h2v2h-2zM3 4h2v2h-2zM7 4h2v2h-2zM0 8h2v2h-2zM3 8h2v2h-2zM7 8h2v2h-2z" />
      </svg>
    </GhStatus>
  </GhWindow>
);

export default function App() {
  return (
    <Desktop>
      <Global />
      <Rhino />
      <Grasshopper />
    </Desktop>
  );
}
